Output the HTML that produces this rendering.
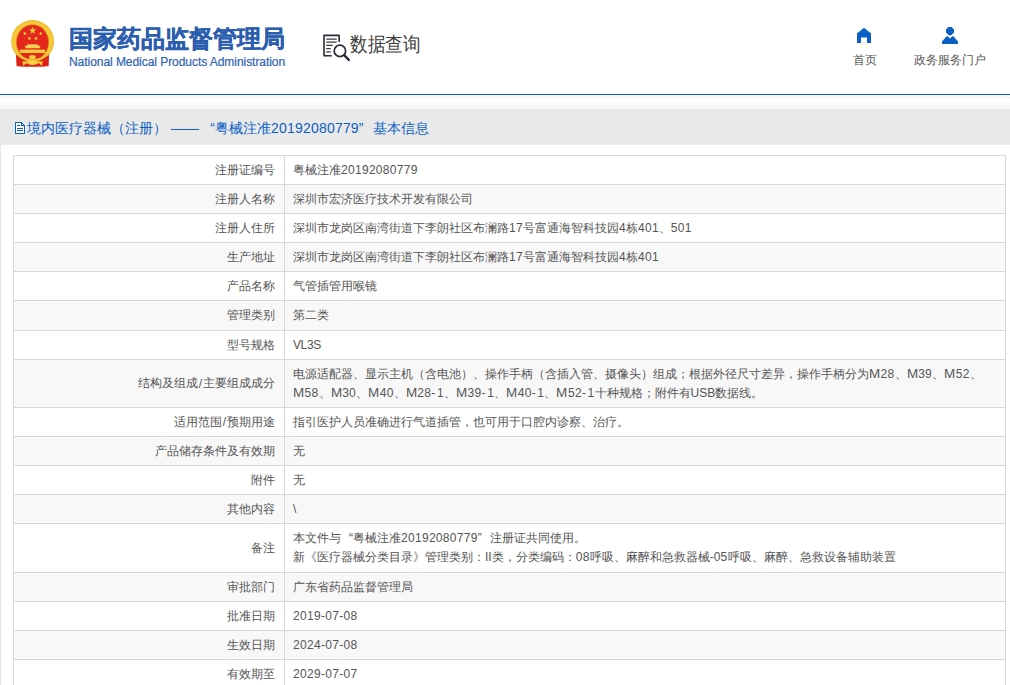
<!DOCTYPE html>
<html><head><meta charset="utf-8">
<style>
*{margin:0;padding:0;box-sizing:border-box}
html,body{width:1010px;height:685px;overflow:hidden;background:#fff}
body{font-family:"Liberation Sans",sans-serif;position:relative;color:#555}
.abs{position:absolute;white-space:nowrap}
#title{left:69px;top:23px;font-size:24px;line-height:32px;font-weight:bold;color:#2b5eae;-webkit-text-stroke:0.35px #2b5eae}
#entitle{left:69px;top:54px;font-size:12px;line-height:16px;color:#2f62b1;letter-spacing:-0.05px;-webkit-text-stroke:0.2px #2f62b1}
#sjcx{left:350px;top:31px;font-size:18px;line-height:24px;color:#3d3d3d;transform:scale(0.985,1.12);transform-origin:0 0}
.fw{display:inline-block;width:16px;text-align:right}.fw2{display:inline-block;width:14px;text-align:left}
.q1{display:inline-block;width:12px;text-align:right}.q2{display:inline-block;width:12px;text-align:left}
.p1{display:inline-block;width:18px;text-align:right}.p2{display:inline-block;width:18px;text-align:left}.n{letter-spacing:0.3px}.h{letter-spacing:1.7px}.sl{margin-left:1px;margin-right:1px}.m{display:inline-block;width:11.6px;transform:scaleX(1.12);transform-origin:0 50%}
.navt{font-size:12px;line-height:16px;color:#555}
#bline{left:0;top:94px;width:1010px;height:1px;background:#0a5fc4}
#hatch{left:0;top:95px;width:1010px;height:4px;background:repeating-linear-gradient(135deg,#fff 0,#fff 2.2px,#ebebeb 2.2px,#ebebeb 3.1px)}
#grad{left:0;top:100px;width:1010px;height:9px;background:linear-gradient(#fff,#f4f4f4)}
#crumb{left:0;top:109px;width:1010px;height:35px;background:#e9e9e9}
#crumbt{left:27px;top:118px;font-size:14px;line-height:20px;color:#0a5fc4}
#cont{left:0;top:144px;width:1010px;height:541px;border-left:1px solid #e6e6e6;border-top:1px solid #e8ecf5;background:#fff}
#tbl{left:13px;top:155px;width:993px;border-right:1px solid #d8d8d8;border-left:1px solid #d8d8d8}
.r{position:relative;border-top:1px solid #d8d8d8;font-size:12px;color:#555}
.r.g{background:#f8f8f8}
.l{position:absolute;left:0;top:0;bottom:0;width:271px;border-right:1px solid #d8d8d8;display:flex;align-items:center;justify-content:flex-end;padding-right:9px;white-space:nowrap}
.v{position:absolute;left:272px;top:0;bottom:0;right:0;display:flex;align-items:center;padding-left:7px;line-height:19px;white-space:nowrap}
</style></head><body>
<!-- emblem -->
<svg class="abs" style="left:0;top:0" width="70" height="80" viewBox="0 0 70 80">
  <ellipse cx="32.6" cy="41.4" rx="21.4" ry="21.3" fill="#eab52a"/>
  <ellipse cx="32.6" cy="41.4" rx="20.6" ry="20.5" fill="#f5c838"/>
  <ellipse cx="32.5" cy="42.3" rx="16.2" ry="17.6" fill="#e4281e" stroke="#d49a1c" stroke-width="0.5"/>
  <path d="M27.3 44.4 H37.9 V46 H27.3 Z" fill="#f8da66"/><path d="M25 45.8 Q32.6 45 40.2 45.8 L39.7 48.2 H25.5 Z" fill="#f6d050"/>
  <path d="M19.8 49.6 H45.2 V53 H19.8 Z" fill="#f6cc3c"/>
  <path d="M15.9 53.4 Q19 54 22 56.8 Q27 60.5 32.6 60.8 Q38 60.5 43 56.8 Q46 54 49.2 53.4 L48.6 66.2 Q45 66 41.5 66.8 L23.7 66.8 Q20 66 16.6 66.2 Z" fill="#de2119"/>
  <path d="M16.2 52.6 Q24 59.4 32.6 59.4 Q41 59.4 48.8 52.6 L49.2 54.6 Q41 61.8 32.6 61.8 Q24 61.8 15.8 54.6 Z" fill="#f3c534"/>
  <ellipse cx="32.4" cy="57.2" rx="3.4" ry="2.2" fill="#f4c93a"/>
  <path d="M22.3 61.4 Q27 61 32.6 61.6 Q38 61 42.8 61.4 L41.8 66 L39.6 63.6 Q36 63.2 32.6 63.8 Q29 63.2 25.6 63.6 L23.4 66 Z" fill="#f5d040"/>
  <ellipse cx="32.6" cy="62.8" rx="4.3" ry="2.2" fill="#f7d446"/>
  <polygon points="32.7,26.6 33.6,29.3 36.5,29.3 34.2,31.1 35,33.9 32.7,32.2 30.4,33.9 31.2,31.1 28.9,29.3 31.8,29.3" fill="#efcc34"/>
  <circle cx="24.8" cy="33.6" r="1.3" fill="#e9c936"/>
  <circle cx="40.7" cy="33.6" r="1.3" fill="#e9c936"/>
  <circle cx="29.4" cy="38.4" r="1.3" fill="#e9c936"/>
  <circle cx="36.0" cy="38.4" r="1.3" fill="#e9c936"/>
</svg>
<div id="title" class="abs">国家药品监督管理局</div>
<div id="entitle" class="abs">National Medical Products Administration</div>
<!-- data query icon -->
<svg class="abs" style="left:320px;top:32px" width="32" height="32" viewBox="0 0 32 32">
  <path d="M19.15 10 V3.35 H4 V23.75 H11.7" fill="none" stroke="#2a2a38" stroke-width="1.6" stroke-linejoin="round"/>
  <path d="M6.2 7.2 H16.7 M6.2 10.2 H16.7 M6.2 13.4 H12.7 M6.2 16.7 H10.7 M6.2 19.9 H10.7" stroke="#3a3a46" stroke-width="1.2"/>
  <circle cx="19.9" cy="18.9" r="5.7" fill="none" stroke="#2a2a38" stroke-width="1.7"/>
  <path d="M24.2 23.2 L28.8 27.9" stroke="#2a2a38" stroke-width="2.4" stroke-linecap="round"/>
</svg>
<div id="sjcx" class="abs">数据查询</div>
<!-- nav icons -->
<svg class="abs" style="left:856px;top:27px" width="16" height="17" viewBox="0 0 16 17">
  <path d="M1 16 V6 H1.6 L8 0.8 L14.4 6 H15 V16 H11 V10.6 H5 V16 Z" fill="#0a5fc4"/>
</svg>
<div class="abs navt" style="left:853px;top:52px">首页</div>
<svg class="abs" style="left:941px;top:26px" width="18" height="19" viewBox="0 0 18 19">
  <path d="M7.4 1 H10.6 L13 3.4 V6.6 L10.6 9 H9.6 L9 10 L8.4 9 H7.4 L5 6.6 V3.4 Z" fill="#0a5fc4"/>
  <path d="M1 18 V15.4 L5.6 10.2 H6.6 L9 12.4 L11.4 10.2 H12.4 L17 15.4 V18 Z" fill="#0a5fc4"/>
</svg>
<div class="abs navt" style="left:914px;top:52px">政务服务门户</div>

<div id="bline" class="abs"></div>
<svg class="abs" style="left:0;top:95px" width="1010" height="4" shape-rendering="crispEdges"><defs><pattern id="hp" width="4" height="4" patternUnits="userSpaceOnUse"><rect x="3" y="0" width="1" height="1" fill="#e6e6e6"/><rect x="2" y="1" width="1" height="1" fill="#e6e6e6"/><rect x="1" y="2" width="1" height="1" fill="#e6e6e6"/><rect x="0" y="3" width="1" height="1" fill="#e6e6e6"/></pattern></defs><rect width="1010" height="4" fill="url(#hp)"/></svg>
<div id="grad" class="abs"></div>
<div id="crumb" class="abs"></div>
<svg class="abs" style="left:15px;top:122px" width="10" height="12" viewBox="0 0 10 12" shape-rendering="crispEdges">
  <path d="M1 1 H6 V3 H9 V11 H1 Z" fill="#fcf8f0"/>
  <path d="M0 0 H6 V1 H0Z M0 0 H1 V12 H0Z M0 11 H10 V12 H0Z M9 3 H10 V12 H9Z M6 0 H7 V1 H6Z M7 1 H8 V2 H7Z M8 2 H9 V3 H8Z M6 1 H7 V3 H6Z M6 3 H9 V4 H6Z" fill="#0a5fc4"/>
  <path d="M2 3 H5 V4 H2Z M2 6 H8 V7 H2Z M2 8 H8 V9 H2Z" fill="#0a5fc4"/>
</svg>
<div id="crumbt" class="abs">境内医疗器械（注册）<span style="margin-left:4px">——</span><span class="fw">“</span>粤械注准<span style="letter-spacing:0.2px">20192080779</span><span class="fw2">”</span>基本信息</div>
<div id="cont" class="abs"></div>

<div id="tbl" class="abs">
  <div class="r" style="height:29px"><div class="l">注册证编号</div><div class="v"><div>粤械注准<span class="n">20192080779</span></div></div></div>
  <div class="r g" style="height:29px"><div class="l">注册人名称</div><div class="v"><div>深圳市宏济医疗技术开发有限公司</div></div></div>
  <div class="r" style="height:29px"><div class="l">注册人住所</div><div class="v"><div>深圳市龙岗区南湾街道下李朗社区布澜路<span class="n">17</span>号富通海智科技园<span class="n">4</span>栋<span class="n">401</span>、<span class="n">501</span></div></div></div>
  <div class="r g" style="height:29px"><div class="l">生产地址</div><div class="v"><div>深圳市龙岗区南湾街道下李朗社区布澜路<span class="n">17</span>号富通海智科技园<span class="n">4</span>栋<span class="n">401</span></div></div></div>
  <div class="r" style="height:29px"><div class="l">产品名称</div><div class="v"><div>气管插管用喉镜</div></div></div>
  <div class="r g" style="height:30px"><div class="l">管理类别</div><div class="v"><div>第二类</div></div></div>
  <div class="r" style="height:29px"><div class="l">型号规格</div><div class="v"><div style="letter-spacing:-0.4px">VL3S</div></div></div>
  <div class="r g" style="height:48px"><div class="l">结构及组成<span class="sl">/</span>主要组成成分</div><div class="v"><div>电源适配器、显示主机（含电池）、操作手柄（含插入管、摄像头）组成；根据外径尺寸差异，操作手柄分为<span class="m">M</span><span class="n">28</span>、<span class="m">M</span><span class="n">39</span>、<span class="m">M</span><span class="n">52</span>、<br><span class="m">M</span><span class="n">58</span>、<span class="m">M</span><span class="n">30</span>、<span class="m">M</span><span class="n">40</span>、<span class="m">M</span><span class="n">28<span class="h">-</span>1</span>、<span class="m">M</span><span class="n">39<span class="h">-</span>1</span>、<span class="m">M</span><span class="n">40<span class="h">-</span>1</span>、<span class="m">M</span><span class="n">52<span class="h">-</span>1</span>十种规格；附件有USB数据线。</div></div></div>
  <div class="r" style="height:29px"><div class="l">适用范围<span class="sl">/</span>预期用途</div><div class="v"><div>指引医护人员准确进行气道插管，也可用于口腔内诊察、治疗。</div></div></div>
  <div class="r g" style="height:29px"><div class="l">产品储存条件及有效期</div><div class="v"><div>无</div></div></div>
  <div class="r" style="height:29px"><div class="l">附件</div><div class="v"><div>无</div></div></div>
  <div class="r g" style="height:29px"><div class="l">其他内容</div><div class="v"><div>\</div></div></div>
  <div class="r" style="height:49px"><div class="l">备注</div><div class="v"><div>本文件与<span class="q1">“</span>粤械注准<span class="n">20192080779</span><span class="q2">”</span>注册证共同使用。<br>新《医疗器械分类目录》管理类别：II类，分类编码：<span class="n">08</span>呼吸、麻醉和急救器械-<span class="n">05</span>呼吸、麻醉、急救设备辅助装置</div></div></div>
  <div class="r g" style="height:29px"><div class="l">审批部门</div><div class="v"><div>广东省药品监督管理局</div></div></div>
  <div class="r" style="height:29px"><div class="l">批准日期</div><div class="v"><div><span class="n">2019-07-08</span></div></div></div>
  <div class="r g" style="height:29px"><div class="l">生效日期</div><div class="v"><div><span class="n">2024-07-08</span></div></div></div>
  <div class="r" style="height:29px"><div class="l">有效期至</div><div class="v"><div><span class="n">2029-07-07</span></div></div></div>
</div>
</body></html>
